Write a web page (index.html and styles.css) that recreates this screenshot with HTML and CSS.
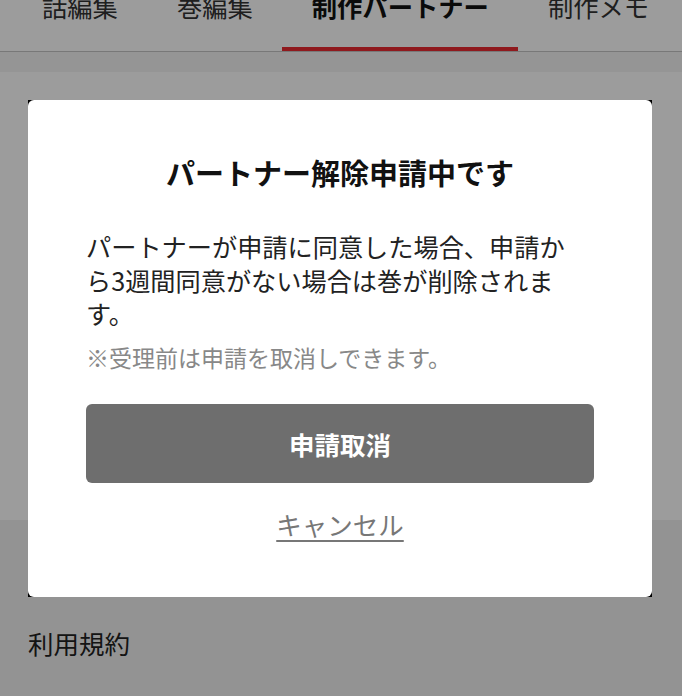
FILE: index.html
```html
<!DOCTYPE html>
<html lang="ja">
<head>
<meta charset="utf-8">
<title>パートナー解除申請中です</title>
<link rel="stylesheet" href="styles.css">
</head>
<body>
<div class="page">
  <nav class="tabs">
    <div class="tab">話編集</div>
    <div class="tab">巻編集</div>
    <div class="tab active">制作パートナー</div>
    <div class="tab">制作メモ</div>
  </nav>
  <div class="band"></div>
  <main class="content"></main>
  <section class="footer">
    <div class="footer-link">利用規約</div>
  </section>
</div>

<div class="overlay">
  <div class="modal">
    <div class="modal-inner">
      <h2 class="modal-title">パートナー解除申請中です</h2>
      <p class="modal-body">パートナーが申請に同意した場合、申請から3週間同意がない場合は巻が削除されます。</p>
      <p class="modal-note">※受理前は申請を取消しできます。</p>
      <button class="btn-primary">申請取消</button>
      <a class="btn-cancel">キャンセル</a>
    </div>
  </div>
</div>
</body>
</html>
```

FILE: styles.css
```css
* { box-sizing: border-box; }
html, body {
  margin: 0;
  padding: 0;
  height: 100%;
  overflow: hidden;
}
body {
  font-family: "Noto Sans CJK JP", "Noto Sans", sans-serif;
  background: #ffffff;
  color: #222;
}
.page {
  display: flex;
  flex-direction: column;
  height: 100%;
}
.tabs {
  display: flex;
  margin-top: -6px;
  padding-left: 12.5px;
  height: 58px;
  border-bottom: 1px solid #c4c4c4;
  flex-shrink: 0;
  white-space: nowrap;
  overflow: hidden;
}
.tab {
  height: 57px;
  padding: 0 29.5px;
  font-size: 25.3px;
  line-height: 25px;
  color: #333;
}
.tab.active {
  font-weight: 700;
  color: #111;
  border-bottom: 4px solid #ea2a30;
}
.band {
  height: 20px;
  background: #f4f4f4;
  flex-shrink: 0;
}
.content {
  height: 448px;
  flex-shrink: 0;
  background: #ffffff;
}
.footer {
  flex: 1;
  background: #f1f1f1;
  padding: 106px 28px 0;
}
.footer-link {
  font-size: 25.5px;
  line-height: 34px;
  color: #222;
}
.overlay {
  position: fixed;
  inset: 0;
  background: rgba(0, 0, 0, 0.39);
  display: flex;
  align-items: flex-start;
  padding: 100px 0 0 28px;
}
.modal {
  width: 624px;
  height: 497px;
  background: #000;
}
.modal-inner {
  height: 100%;
  background: #fff;
  border-radius: 6px;
  padding: 53px 58px 0;
  display: flex;
  flex-direction: column;
}
.modal-title {
  margin: 0;
  font-size: 29px;
  line-height: 39px;
  font-weight: 700;
  color: #111;
  text-align: center;
}
.modal-body {
  margin: 38px 0 0;
  max-width: 500px;
  font-size: 25.2px;
  line-height: 33.5px;
  color: #222;
}
.modal-note {
  margin: 10px 0 0;
  font-size: 23px;
  line-height: 33px;
  color: #888;
}
.btn-primary {
  margin-top: 30.5px;
  height: 79px;
  width: 100%;
  border: none;
  border-radius: 6px;
  background: #6e6e6e;
  color: #fff;
  font-family: inherit;
  font-size: 25.5px;
  font-weight: 700;
}
.btn-cancel {
  margin-top: 23.5px;
  align-self: center;
  font-size: 25.5px;
  line-height: 33px;
  color: #777;
  text-decoration: underline;
  text-decoration-thickness: 2px;
  text-underline-offset: 5px;
}
```
